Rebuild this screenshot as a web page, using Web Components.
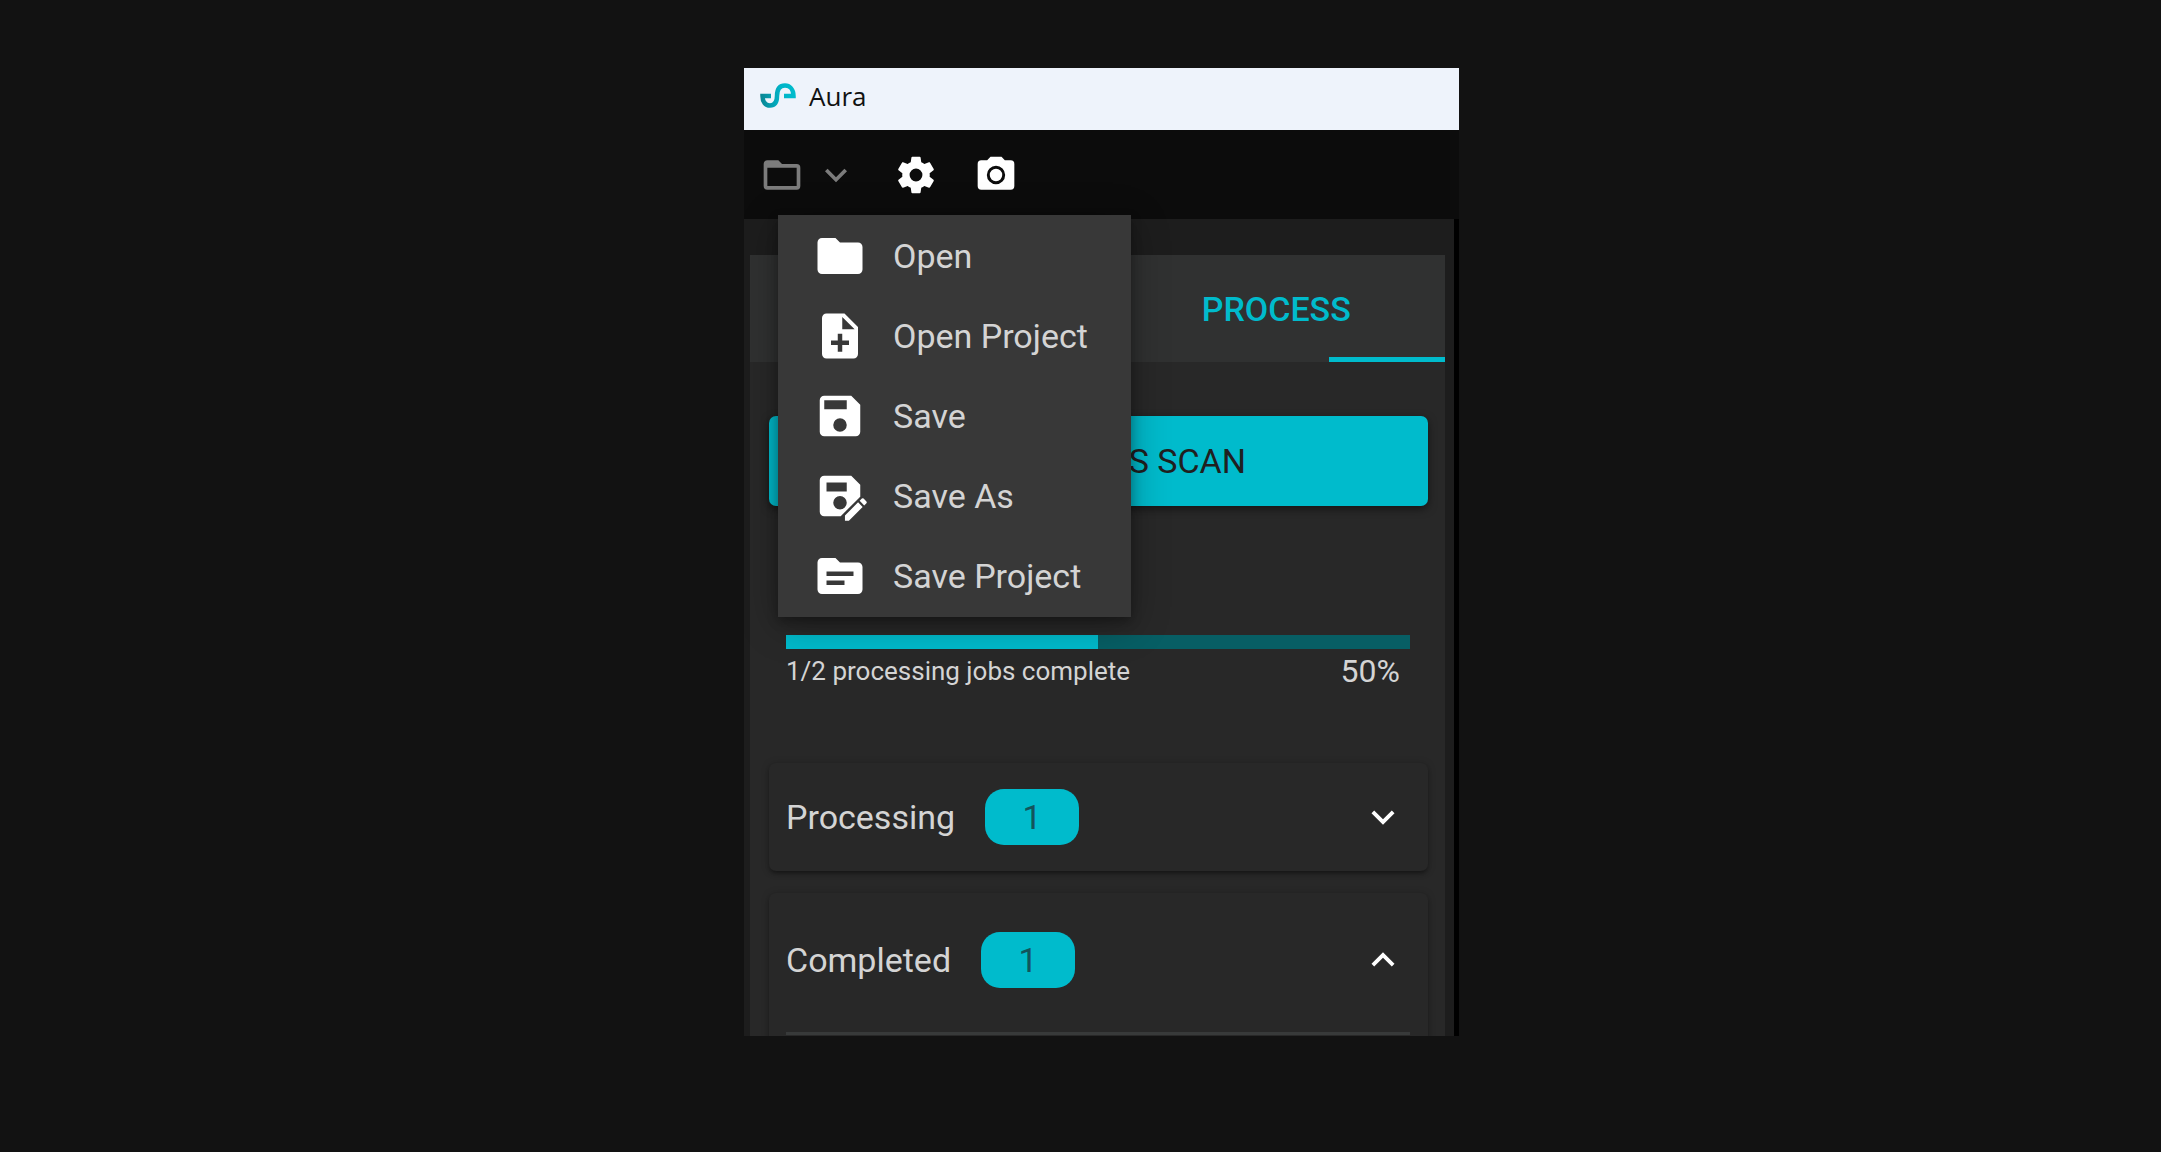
<!DOCTYPE html>
<html lang="en">
<head>
<meta charset="utf-8">
<title>Aura</title>
<style>
  body {
    margin: 0;
    min-height: 100vh;
    display: grid;
    grid-template-columns: 744fr 715fr 702fr;
    background: #121212;
    font-family: Roboto, "Liberation Sans", sans-serif;
    font-size: 34px;
    color: #d4d4d4;
    --accent: #00bbcc;
  }

  aura-window {
    grid-column: 2;
    margin-top: 68px;
  }
</style>
</head>
<body>
  <aura-window name="Aura">
    <aura-toolbar slot="toolbar">
      <aura-menu>
        <aura-menu-item icon="folder">Open</aura-menu-item>
        <aura-menu-item icon="fileAdd">Open Project</aura-menu-item>
        <aura-menu-item icon="save">Save</aura-menu-item>
        <aura-menu-item icon="saveAs">Save As</aura-menu-item>
        <aura-menu-item icon="folderText">Save Project</aura-menu-item>
      </aura-menu>
    </aura-toolbar>
    <aura-tabs></aura-tabs>
    <aura-action>REPROCESS SCAN</aura-action>
    <aura-progress value="1" max="2">processing jobs complete</aura-progress>
    <aura-section count="1">Processing</aura-section>
    <aura-section count="1" open>Completed</aura-section>
  </aura-window>

<script>
const paths = {
  folder: 'M10 4H4c-1.11 0-2 .89-2 2v12a2 2 0 0 0 2 2h16a2 2 0 0 0 2-2V8a2 2 0 0 0-2-2h-8l-2-2z',
  folderOutline: 'M20 18H4V8h16m0-2h-8l-2-2H4c-1.11 0-2 .89-2 2v12a2 2 0 0 0 2 2h16a2 2 0 0 0 2-2V8a2 2 0 0 0-2-2z',
  folderText: 'M20 6h-8l-2-2H4c-1.11 0-2 .9-2 2v12c0 1.1.89 2 2 2h16c1.11 0 2-.9 2-2V8c0-1.1-.89-2-2-2zm-6 10H6v-2h8v2zm4-4H6v-2h12v2z',
  fileAdd: 'M14 2H6c-1.1 0-2 .9-2 2v16c0 1.1.9 2 2 2h12c1.1 0 2-.9 2-2V8l-6-6zm2 14h-3v3h-2v-3H8v-2h3v-3h2v3h3v2zm-3-7V3.500L18.500 9H13z',
  save: 'M15 9H5V5h10m-3 14a3 3 0 0 1-3-3 3 3 0 0 1 3-3 3 3 0 0 1 3 3 3 3 0 0 1-3 3m5-16H5a2 2 0 0 0-2 2v14a2 2 0 0 0 2 2h14a2 2 0 0 0 2-2V7l-4-4z',
  saveAs: 'M17 3H5a2 2 0 0 0-2 2v14a2 2 0 0 0 2 2h7.300L21 12.300V7l-4-4zM6 6h9v4H6V6zm6 6a3 3 0 1 1 0 6 3 3 0 0 1 0-6zM23.750 15.190l-.98.980-2.040-2.040.980-.980a.550.550 0 0 1 .770 0l1.270 1.270c.210.210.210.560 0 .770zM14.200 20.660l5.830-5.830 2.040 2.040L15.960 23H14.200v-2.340z',
  down: 'M7.410 8.580 12 13.170l4.590-4.590L18 10l-6 6-6-6 1.410-1.420z',
  up: 'M7.410 15.410 12 10.830l4.590 4.580L18 14l-6-6-6 6 1.410 1.410z',
  settings: 'M12 15.500A3.500 3.500 0 0 1 8.500 12 3.500 3.500 0 0 1 12 8.500a3.500 3.500 0 0 1 3.500 3.500 3.500 3.500 0 0 1-3.500 3.500m7.430-2.530c.040-.320.070-.640.070-.970s-.030-.660-.070-1l2.110-1.630c.190-.150.240-.420.120-.640l-2-3.460c-.120-.220-.390-.310-.610-.220l-2.490 1c-.520-.390-1.060-.730-1.690-.980l-.370-2.650A.506.506 0 0 0 14 2h-4c-.250 0-.460.180-.500.420l-.370 2.650c-.630.250-1.170.590-1.690.980l-2.490-1c-.220-.090-.490 0-.610.220l-2 3.460c-.130.220-.070.490.120.640L4.570 11c-.040.340-.070.670-.070 1s.030.650.070.970l-2.110 1.660c-.190.150-.250.420-.120.640l2 3.460c.120.220.390.300.610.220l2.490-1.010c.520.400 1.060.740 1.690.990l.370 2.650c.040.240.250.420.500.420h4c.250 0 .460-.180.500-.420l.370-2.650c.630-.260 1.170-.590 1.690-.990l2.490 1.010c.220.080.490 0 .610-.220l2-3.460c.120-.220.070-.490-.120-.640l-2.110-1.660z',
  camera: 'M9 2 7.170 4H4a2 2 0 0 0-2 2v12a2 2 0 0 0 2 2h16a2 2 0 0 0 2-2V6a2 2 0 0 0-2-2h-3.170L15 2H9zm3 5a5 5 0 1 1 0 10 5 5 0 0 1 0-10zm0 1.600a3.400 3.400 0 1 0 0 6.800 3.400 3.400 0 0 0 0-6.800z'
};

// Attach a shadow root and fill it from a template
function render(host, html) {
  const tmplt = document.createElement('template');
  tmplt.innerHTML = html;
  const shadowRoot = host.attachShadow({ mode: 'open' });
  shadowRoot.appendChild(tmplt.content.cloneNode(true));
  return shadowRoot;
}

class AuraIcon extends HTMLElement {
  constructor() {
    super();
    const name = this.getAttribute('name');
    render(this, `
      <style>
        :host { display: block; flex: none; width: 44px; height: 44px; }
        svg { display: block; width: 100%; height: 100%; fill: currentColor; }
      </style>
      <svg viewBox="0 0 24 24" aria-hidden="true"><path fill-rule="evenodd" d="${paths[name]}"/></svg>
    `);
  }
}

class AuraWindow extends HTMLElement {
  constructor() {
    super();
    render(this, `
      <style>
        :host {
          display: grid;
          grid-template-rows: auto auto 1fr;
          height: 968px;
          overflow: hidden;
        }
        header {
          display: flex;
          align-items: center;
          gap: 13px;
          height: 62px;
          padding: 0 16px 6px 14px;
          box-sizing: border-box;
          background: #eef3fb;
          color: #111;
          font-family: "Open Sans", "Noto Sans", sans-serif;
          font-size: 26px;
        }
        .logo { width: 38px; height: 28px; }
        main {
          min-height: 0;
          padding: 36px 9px 0 6px;
          background: #1d1d1d;
          border-right: 5px solid #000;
        }
        .panel {
          display: flex;
          flex-direction: column;
          height: 100%;
          background: #282828;
        }
      </style>
      <header>
        <svg class="logo" viewBox="0 -1 38 28" fill="none" stroke-width="4.500" aria-hidden="true">
          <defs>
            <linearGradient id="g" gradientUnits="userSpaceOnUse" x1="0" y1="0" x2="38" y2="0">
              <stop offset="0" stop-color="#0b7f8c"/>
              <stop offset=".6" stop-color="#00b4c8"/>
              <stop offset="1" stop-color="#00bccc"/>
            </linearGradient>
          </defs>
          <path stroke="url(#g)" d="M13 13H4.500c0 6 3 9.500 7.500 9.500 5 0 7-3.500 7-9.500 0-7 2.500-10.500 8-10.500 4.500 0 8.500 3.500 8.500 10.500H26"/>
        </svg>
        <span>${this.getAttribute('name')}</span>
      </header>
      <slot name="toolbar"></slot>
      <main><div class="panel"><slot></slot></div></main>
    `);
  }
}

class AuraToolbar extends HTMLElement {
  constructor() {
    super();
    render(this, `
      <style>
        :host {
          display: flex;
          align-items: center;
          gap: 36px;
          position: relative;
          height: 89px;
          padding-left: 16px;
          box-sizing: border-box;
          background: #0c0c0c;
          color: #fff;
        }
        button {
          display: flex;
          align-items: center;
          padding: 0;
          border: 0;
          background: none;
          color: inherit;
        }
        .file { gap: 10px; color: #7c7c7c; }
        ::slotted(aura-menu) {
          position: absolute;
          top: 85px;
          left: 34px;
          z-index: 1;
        }
      </style>
      <button class="file" aria-label="File" aria-expanded="true">
        <aura-icon name="folderOutline"></aura-icon>
        <aura-icon name="down"></aura-icon>
      </button>
      <button aria-label="Settings"><aura-icon name="settings"></aura-icon></button>
      <button aria-label="Camera"><aura-icon name="camera"></aura-icon></button>
      <slot></slot>
    `);
  }
}

class AuraMenu extends HTMLElement {
  constructor() {
    super();
    render(this, `
      <style>
        :host {
          display: flex;
          flex-direction: column;
          width: 353px;
          padding: 1px 0;
          background: #383838;
          box-shadow: 0 4px 10px rgba(0, 0, 0, .3), 0 8px 36px rgba(0, 0, 0, .3);
        }
      </style>
      <slot></slot>
    `);
  }
}

class AuraMenuItem extends HTMLElement {
  constructor() {
    super();
    render(this, `
      <style>
        :host { display: block; color: #d4d4d4; }
        button {
          display: flex;
          align-items: center;
          gap: 26px;
          width: 100%;
          height: 80px;
          padding: 0 0 0 35px;
          border: 0;
          background: none;
          color: inherit;
          font: inherit;
          white-space: nowrap;
        }
        aura-icon { width: 54px; height: 54px; color: #fff; }
      </style>
      <button><aura-icon name="${this.getAttribute('icon')}"></aura-icon><slot></slot></button>
    `);
  }
}

class AuraTabs extends HTMLElement {
  constructor() {
    super();
    render(this, `
      <style>
        :host {
          display: grid;
          grid-template-columns: 1fr 1fr;
          position: relative;
          flex: none;
          height: 107px;
          background: #303131;
        }
        button {
          grid-column: 2;
          padding: 0 0 0 10px;
          border: 0;
          background: none;
          color: var(--accent);
          font: inherit;
          font-weight: 500;
        }
        /* indicator sliding in under the active tab */
        .bar {
          position: absolute;
          right: 0;
          bottom: 0;
          width: 116px;
          height: 5px;
          background: var(--accent);
        }
      </style>
      <button>PROCESS</button>
      <div class="bar"></div>
    `);
  }
}

class AuraAction extends HTMLElement {
  constructor() {
    super();
    render(this, `
      <style>
        :host { display: block; flex: none; margin: 54px 17px 0 19px; }
        button {
          width: 100%;
          height: 90px;
          padding: 0 0 0 10px;
          border: 0;
          border-radius: 7px;
          background: var(--accent);
          box-shadow: 0 3px 8px rgba(0, 0, 0, .5);
          color: #202020;
          font: inherit;
        }
      </style>
      <button><slot></slot></button>
    `);
  }
}

class AuraProgress extends HTMLElement {
  constructor() {
    super();
    const value = Number(this.getAttribute('value'));
    const max = Number(this.getAttribute('max'));
    render(this, `
      <style>
        :host { display: block; flex: none; margin: 129px 35px 0 36px; }
        progress {
          display: block;
          width: 100%;
          height: 14px;
          appearance: none;
          border: 0;
        }
        progress::-webkit-progress-bar { background: #075e64; }
        progress::-webkit-progress-value { background: var(--accent); }
        .row {
          display: flex;
          align-items: center;
          justify-content: space-between;
          height: 44px;
          padding-right: 10px;
          font-size: 32px;
        }
        label { font-size: 26px; }
      </style>
      <progress id="jobs" value="${value}" max="${max}"></progress>
      <div class="row">
        <label for="jobs">${value}/${max} <slot></slot></label>
        <span>${value / max * 100}%</span>
      </div>
    `);
  }
}

class AuraSection extends HTMLElement {
  constructor() {
    super();
    const open = this.hasAttribute('open');
    render(this, `
      <style>
        :host {
          display: block;
          flex: none;
          margin: 70px 17px 0 19px;
          border-radius: 7px;
          box-shadow: 0 3px 4px -1px rgba(0, 0, 0, .4), 0 1px 8px rgba(0, 0, 0, .2);
        }
        :host([open]) { margin-top: 22px; }
        button {
          display: flex;
          align-items: center;
          width: 100%;
          height: 108px;
          padding: 0 22px 0 17px;
          border: 0;
          background: none;
          color: inherit;
          font: inherit;
        }
        :host([open]) button { height: 133px; }
        .count {
          display: grid;
          place-items: center;
          width: 94px;
          height: 56px;
          margin-left: 30px;
          border-radius: 19px;
          background: var(--accent);
          color: #13545b;
        }
        aura-icon { width: 46px; height: 46px; margin-left: auto; color: #fff; }
        .content {
          height: 60px;
          margin: 6px 18px 0 17px;
          border-top: 3px solid #383a3a;
        }
      </style>
      <button aria-expanded="${open}">
        <slot></slot>
        <span class="count">${this.getAttribute('count')}</span>
        <aura-icon name="${open ? 'up' : 'down'}"></aura-icon>
      </button>
      ${open ? '<div class="content"></div>' : ''}
    `);
  }
}

window.customElements.define('aura-icon', AuraIcon);
window.customElements.define('aura-window', AuraWindow);
window.customElements.define('aura-toolbar', AuraToolbar);
window.customElements.define('aura-menu', AuraMenu);
window.customElements.define('aura-menu-item', AuraMenuItem);
window.customElements.define('aura-tabs', AuraTabs);
window.customElements.define('aura-action', AuraAction);
window.customElements.define('aura-progress', AuraProgress);
window.customElements.define('aura-section', AuraSection);
</script>
</body>
</html>
